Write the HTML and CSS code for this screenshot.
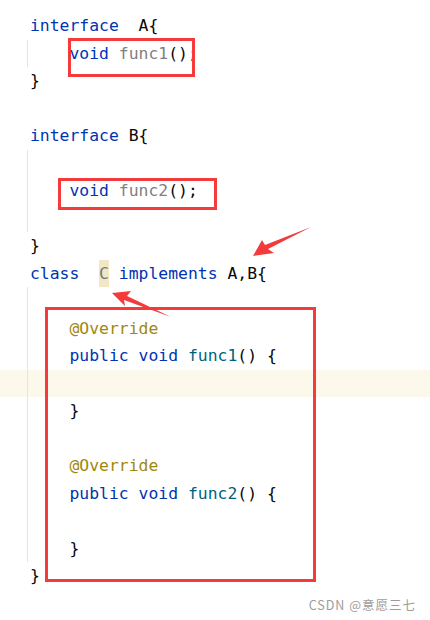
FILE: index.html
```html
<!DOCTYPE html>
<html>
<head>
<meta charset="utf-8">
<link rel="stylesheet" href="styles.css">
</head>
<body>
<div class="page">
  <div class="code">
    <div class="ln"><span class="kw">interface</span>  A{</div>
    <div class="blk">
      <div class="ln in"><span class="kw">void</span> <span class="unused">func1</span>();</div>
    </div>
    <div class="ln">}</div>
    <div class="ln"> </div>
    <div class="ln"><span class="kw">interface</span> B{</div>
    <div class="blk">
      <div class="ln in"> </div>
      <div class="ln in"><span class="kw">void</span> <span class="unused">func2</span>();</div>
      <div class="ln in"> </div>
    </div>
    <div class="ln">}</div>
    <div class="ln"><span class="kw">class</span>  <span class="cls">C</span> <span class="kw">implements</span> A,B{</div>
    <div class="blk">
      <div class="ln in"> </div>
      <div class="ln in"><span class="ann">@Override</span></div>
      <div class="ln in"><span class="kw">public void</span> <span class="fn">func1</span>() {</div>
      <div class="ln in cur"> </div>
      <div class="ln in">}</div>
      <div class="ln in"> </div>
      <div class="ln in"><span class="ann">@Override</span></div>
      <div class="ln in"><span class="kw">public void</span> <span class="fn">func2</span>() {</div>
      <div class="ln in"> </div>
      <div class="ln in">}</div>
    </div>
    <div class="ln">}</div>
  </div>
  <div class="mark">CSDN @意愿三七</div>

  <div class="box box1"></div>
  <div class="box box2"></div>
  <div class="box box3"></div>
  <svg class="arrows" width="430" height="620" viewBox="0 0 430 620">
    <polygon points="253,256 262,240 265,245 311,227 268,249 274,253" fill="#f33b3b"/>
    <polygon points="112,293 131,291 127,296 171,317 124,300 125,306" fill="#f33b3b"/>
  </svg>
</div>
</body>
</html>
```

FILE: styles.css
```css
html, body {
  margin: 0;
  padding: 0;
  background: #ffffff;
}
.page {
  position: relative;
  width: 430px;
  height: 620px;
  overflow: hidden;
}
.code {
  padding-top: 12px;
  font-family: "DejaVu Sans Mono", "Liberation Mono", monospace;
  font-size: 16.4px;
  color: #080808;
}
.ln {
  height: 27.5px;
  line-height: 27.5px;
  padding-left: 30px;
  white-space: pre;
}
.ln.in {
  padding-left: 69.5px;
}
.blk {
  background: linear-gradient(#e4e4e4, #e4e4e4) no-repeat 27px 0 / 1px 100%;
}
.ln.cur {
  background: linear-gradient(#e4e4e4, #e4e4e4) no-repeat 27px 0 / 1px 100%, #fcf9ec;
}
.kw { color: #0033b3; }
.unused { color: #808080; }
.fn { color: #00627a; }
.ann { color: #9e880d; }
.cls {
  display: inline-block;
  height: 27.5px;
  background: #f2e7c3;
  color: #6f7a86;
}
.mark {
  position: absolute;
  right: 14px;
  top: 595px;
  font-family: "Noto Sans CJK SC", "Noto Sans", sans-serif;
  font-size: 12.5px;
  color: #9c9c9c;
  letter-spacing: 1px;
}
.box {
  position: absolute;
  box-sizing: border-box;
  border: 3px solid #f43a3a;
}
.box1 { left: 68px; top: 38px; width: 127px; height: 39px; }
.box2 { left: 58px; top: 178px; width: 159px; height: 32px; }
.box3 { left: 45px; top: 307px; width: 271px; height: 275px; }
.arrows {
  position: absolute;
  left: 0;
  top: 0;
}
```
